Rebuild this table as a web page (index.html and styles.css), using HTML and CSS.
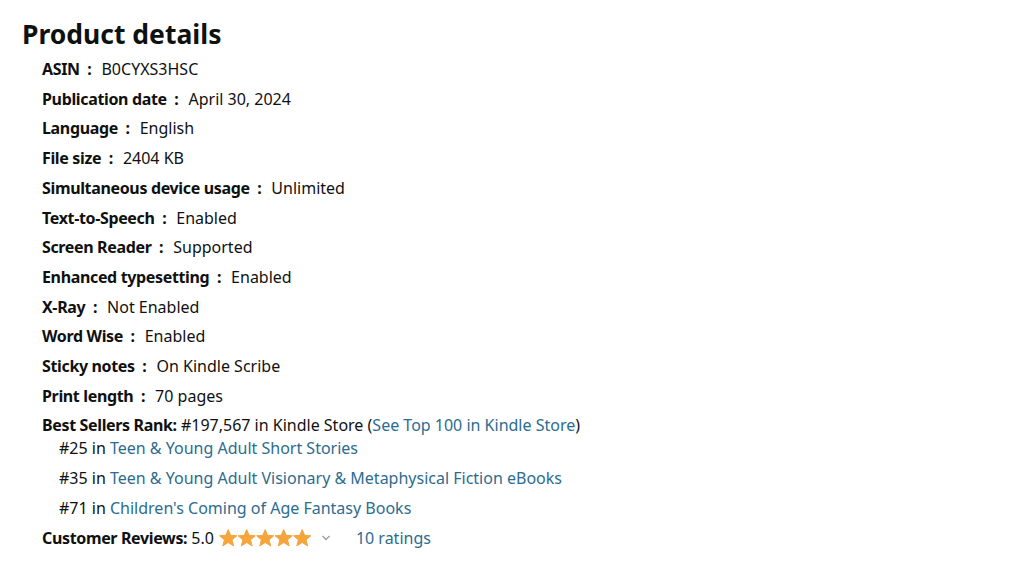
FILE: index.html
```html
<!DOCTYPE html>
<html>
<head>
<meta charset="utf-8">
<link rel="stylesheet" href="styles.css">
</head>
<body>
<div class="details">
  <h2 class="title">Product details</h2>
  <ul class="list">
    <li><span class="lbl">ASIN&nbsp; : </span>&nbsp;<span class="val">B0CYXS3HSC</span></li>
    <li><span class="lbl">Publication date&nbsp; : </span>&nbsp;<span class="val">April 30, 2024</span></li>
    <li><span class="lbl">Language&nbsp; : </span>&nbsp;<span class="val">English</span></li>
    <li><span class="lbl">File size&nbsp; : </span>&nbsp;<span class="val">2404 KB</span></li>
    <li><span class="lbl">Simultaneous device usage&nbsp; : </span>&nbsp;<span class="val">Unlimited</span></li>
    <li><span class="lbl">Text-to-Speech&nbsp; : </span>&nbsp;<span class="val">Enabled</span></li>
    <li><span class="lbl">Screen Reader&nbsp; : </span>&nbsp;<span class="val">Supported</span></li>
    <li><span class="lbl">Enhanced typesetting&nbsp; : </span>&nbsp;<span class="val">Enabled</span></li>
    <li><span class="lbl">X-Ray&nbsp; : </span>&nbsp;<span class="val">Not Enabled</span></li>
    <li><span class="lbl">Word Wise&nbsp; : </span>&nbsp;<span class="val">Enabled</span></li>
    <li><span class="lbl">Sticky notes&nbsp; : </span>&nbsp;<span class="val">On Kindle Scribe</span></li>
    <li><span class="lbl">Print length&nbsp; : </span>&nbsp;<span class="val">70 pages</span></li>
  </ul>
  <div class="rank">
    <div class="rank-main"><span class="lbl">Best Sellers Rank:</span> #197,567 in Kindle Store (<a class="link" href="#">See Top 100 in Kindle Store</a>)</div>
    <ul class="sublist">
      <li>#25 in <a class="link" href="#">Teen &amp; Young Adult Short Stories</a></li>
      <li>#35 in <a class="link" href="#">Teen &amp; Young Adult Visionary &amp; Metaphysical Fiction eBooks</a></li>
      <li>#71 in <a class="link" href="#">Children's Coming of Age Fantasy Books</a></li>
    </ul>
  </div>
  <div class="reviews">
    <span class="lbl">Customer Reviews:</span>
    <span class="score">5.0</span>
    <span class="stars">
      <svg width="94" height="19" viewBox="0 0 94 19">
        <defs>
          <path id="st" d="M9.2 0.6 L11.6 6.3 L17.8 6.8 L13 10.8 L14.6 16.9 L9.2 13.5 L3.8 16.9 L5.4 10.8 L0.6 6.8 L6.8 6.3 Z" stroke-linejoin="round" stroke-width="1"/>
        </defs>
        <use href="#st" x="0" y="1" fill="#f4a53c" stroke="#f4a53c"/>
        <use href="#st" x="18.5" y="1" fill="#f4a53c" stroke="#f4a53c"/>
        <use href="#st" x="37" y="1" fill="#f4a53c" stroke="#f4a53c"/>
        <use href="#st" x="55.5" y="1" fill="#f4a53c" stroke="#f4a53c"/>
        <use href="#st" x="74" y="1" fill="#f4a53c" stroke="#f4a53c"/>
      </svg>
    </span>
    <svg class="chev" width="10" height="8" viewBox="0 0 10 8"><path d="M1.5 2 L5 5.5 L8.5 2" fill="none" stroke="#9a9ca0" stroke-width="1.3"/></svg>
    <a class="link ratings" href="#">10 ratings</a>
  </div>
</div>
</body>
</html>
```
FILE: styles.css
```css
html, body {
  margin: 0;
  padding: 0;
  background: #ffffff;
}
body {
  font-family: "Noto Sans", "Liberation Sans", sans-serif;
  color: #0f1111;
  font-size: 16px;
}
.details {
  padding: 15px 0 0 22px;
}
.title {
  margin: 0;
  font-size: 26.5px;
  font-weight: 700;
  line-height: 38px;
}
.list {
  list-style: none;
  margin: 2px 0 0 0;
  padding: 0 0 0 20px;
}
.list li {
  line-height: 29.72px;
  white-space: nowrap;
}
.lbl {
  font-weight: 700;
  letter-spacing: -0.35px;
}
.val {
  margin-left: 2px;
}
.rank {
  padding-left: 20px;
  margin-top: 5px;
}
.rank-main {
  line-height: 16px;
}
.sublist {
  list-style: none;
  margin: 0;
  padding: 0 0 0 17px;
}
.sublist li {
  line-height: 30px;
}
.link {
  color: #2c6c8f;
  text-decoration: none;
}
.reviews {
  padding-left: 20px;
  height: 30px;
  display: flex;
  align-items: center;
  gap: 4px;
}
.stars {
  display: inline-flex;
  margin-left: 1px;
}
.chev {
  margin-left: 4px;
}
.ratings {
  margin-left: 21px;
}
```
